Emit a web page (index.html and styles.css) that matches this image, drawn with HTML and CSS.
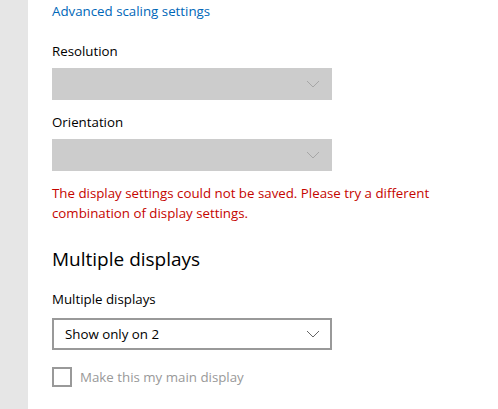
FILE: index.html
```html
<!DOCTYPE html>
<html>
<head>
	<meta charset="utf-8">
	<title>Display settings</title>
	<link rel="stylesheet" href="styles.css">
</head>
<body>
	<div class="page">
		<div class="nav"></div>
		<div class="content">
			<a class="link" href="#">Advanced scaling settings</a>

			<div class="label first">Resolution</div>
			<div class="select disabled"><span></span><svg class="chev" width="14" height="8" viewBox="0 0 14 8"><path d="M1 1 L7 7 L13 1" fill="none" stroke="#a6a6a6" stroke-width="1"/></svg></div>

			<div class="label">Orientation</div>
			<div class="select disabled"><span></span><svg class="chev" width="14" height="8" viewBox="0 0 14 8"><path d="M1 1 L7 7 L13 1" fill="none" stroke="#a6a6a6" stroke-width="1"/></svg></div>

			<p class="error">The display settings could not be saved. Please try a different combination of display settings.</p>

			<h2 class="heading">Multiple displays</h2>

			<div class="label sub">Multiple displays</div>
			<div class="select"><span>Show only on 2</span><svg class="chev" width="14" height="8" viewBox="0 0 14 8"><path d="M1 1 L7 7 L13 1" fill="none" stroke="#666" stroke-width="1"/></svg></div>

			<label class="check">
				<span class="box"></span>
				<span class="check_text">Make this my main display</span>
			</label>
		</div>
	</div>
</body>
</html>
```

FILE: styles.css
```css
body,h2,p,div{margin:0;padding:0;}
a{text-decoration:none;}
body{background:#fff;font-family:"Open Sans","Noto Sans",sans-serif;font-size:13.3px;line-height:20px;color:#000;}
.page{display:flex;height:409px;}
.nav{width:28px;background:#e6e6e6;flex:none;}
.content{padding-left:24px;display:flex;flex-direction:column;align-items:flex-start;}
.link{color:#0067b8;margin-top:1px;}
.label{margin-top:12px;}
.label.first{margin-top:20px;}
.label.sub{margin-top:16px;}
.select{box-sizing:border-box;width:280px;height:32px;margin-top:7px;display:flex;align-items:center;justify-content:space-between;padding:0 10px 0 11px;border:2px solid #999;}
.select.disabled{background:#ccc;border-color:#ccc;}
.label.sub+.select{margin-top:9px;}
.chev{flex:none;}
.error{color:#c50500;width:400px;margin-top:12px;}
.heading{font-size:19px;font-weight:normal;line-height:28px;margin-top:22px;}
.check{display:flex;align-items:center;margin-top:17px;color:#999;}
.box{box-sizing:border-box;width:20px;height:20px;border:2px solid #999;margin-right:8px;}
```
